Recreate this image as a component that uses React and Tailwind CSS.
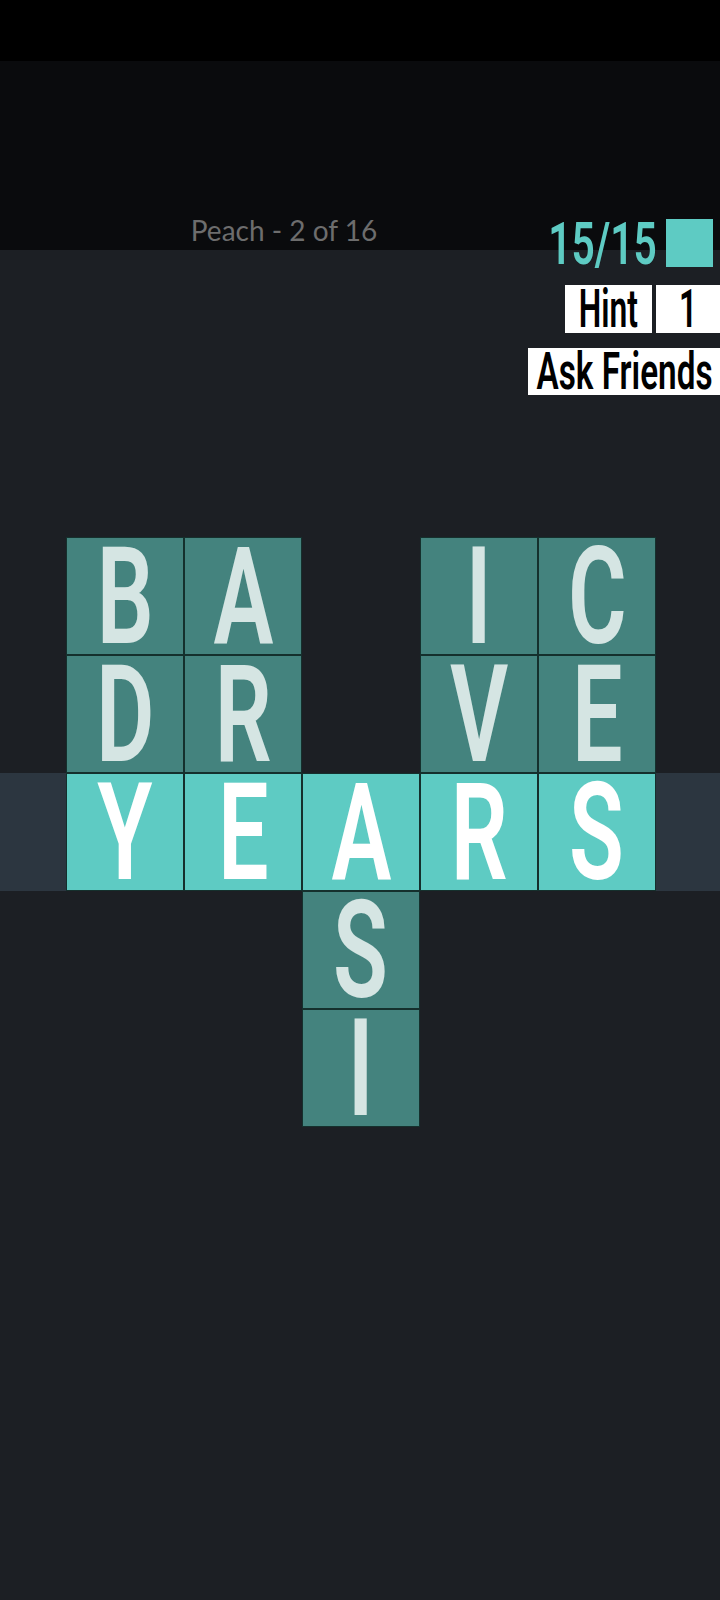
import React from "react";

const rows = [
    ["B", "A", "", "I", "C"],
    ["D", "R", "", "V", "E"],
    ["Y", "E", "A", "R", "S"],
    ["", "", "S", "", ""],
    ["", "", "I", "", ""],
];

const cond = { fontFamily: "Roboto, 'Liberation Sans', sans-serif" };

function Tile({ letter, solved }) {
    if (!letter) return <div className="w-[118px] h-[118px] shrink-0" />;
    return (
        <div
            className={
                "w-[118px] h-[118px] shrink-0 flex items-center justify-center overflow-hidden border border-[#15302d] " +
                (solved ? "bg-[#5ecbc3] text-white" : "bg-[#44837e] text-[#d5e5e3]")
            }
        >
            <span
                className="inline-block text-[136px] leading-[110px] font-semibold scale-x-[0.66] translate-y-[1px]"
                style={cond}
            >
                {letter}
            </span>
        </div>
    );
}

export default function App() {
    return (
        <div className="w-full min-h-[1600px] bg-[#1c1f24]">
            {/* status bar */}
            <div className="h-[61px] bg-black" />

            {/* header */}
            <div className="h-[189px] bg-[#0a0b0d] flex items-end">
                <div className="w-[568px] shrink-0 flex justify-center pb-[6px]">
                    <span
                        className="text-[28px] leading-none text-[#6d6d6d]"
                        style={{ fontFamily: "Lato, 'Noto Sans', sans-serif" }}
                    >
                        Peach - 2 of 16
                    </span>
                </div>
                <div className="flex-1 min-w-0 h-[48px] -mb-[17px] flex items-center justify-end pr-[7px] relative z-10">
                    <span
                        className="inline-block origin-right text-[60px] leading-[46px] font-semibold text-[#5ecbc3] scale-x-[0.68] translate-y-[1px] whitespace-nowrap"
                        style={cond}
                    >
                        15/15
                    </span>
                    <div className="ml-[9px] shrink-0 w-[47px] h-[48px] bg-[#5ecbc3]" />
                </div>
            </div>

            {/* hint */}
            <div className="mt-[35px] flex justify-end gap-[4px]">
                <div className="w-[87px] h-[48px] bg-white flex items-center justify-center overflow-hidden">
                    <span className="inline-block text-[53px] leading-[44px] font-semibold text-black scale-x-[0.6]" style={cond}>
                        Hint
                    </span>
                </div>
                <div className="w-[64px] h-[48px] bg-white flex items-center justify-center overflow-hidden">
                    <span className="inline-block text-[53px] leading-[44px] font-semibold text-black scale-x-[0.6]" style={cond}>
                        1
                    </span>
                </div>
            </div>

            {/* ask friends */}
            <div className="mt-[15px] flex justify-end">
                <div className="w-[192px] h-[47px] bg-white flex items-center justify-center overflow-hidden">
                    <span className="inline-block text-[52px] leading-[43px] font-semibold text-black scale-x-[0.64] whitespace-nowrap" style={cond}>
                        Ask Friends
                    </span>
                </div>
            </div>

            {/* board */}
            <div className="mt-[142px] flex flex-col">
                {rows.map((row, r) => (
                    <div
                        key={r}
                        className={"flex pl-[66px] " + (r === 2 ? "bg-[#2c3640]" : "")}
                    >
                        {row.map((l, c) => (
                            <Tile key={c} letter={l} solved={r === 2} />
                        ))}
                    </div>
                ))}
            </div>
        </div>
    );
}
